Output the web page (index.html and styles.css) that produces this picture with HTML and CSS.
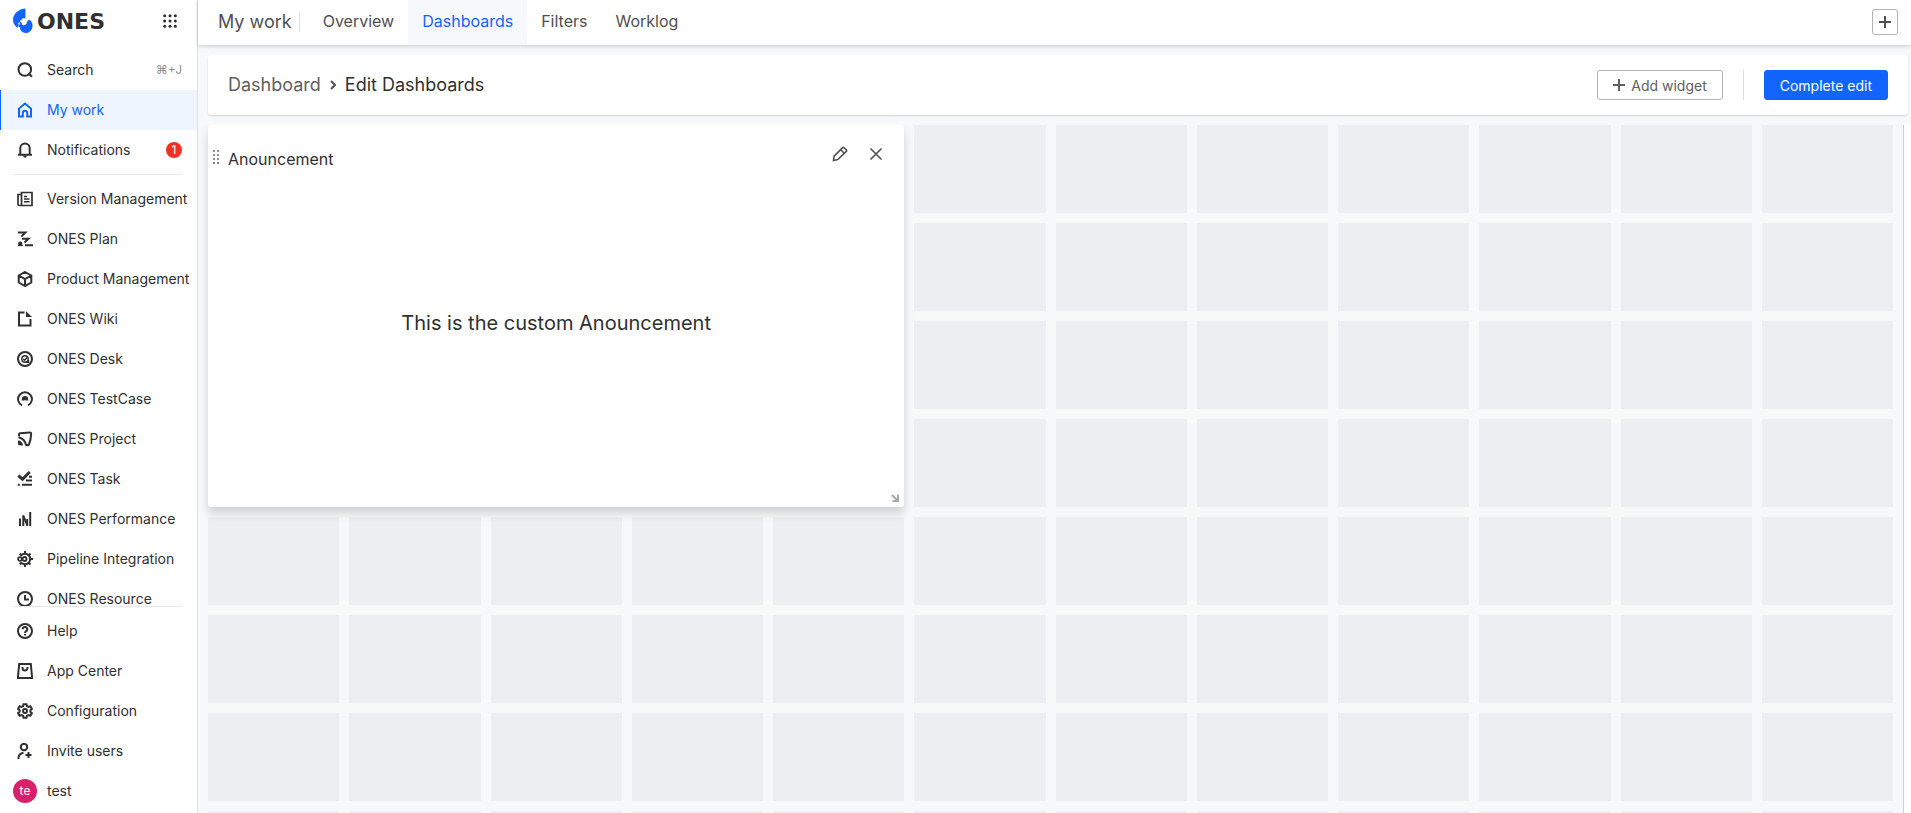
FILE: index.html
```html
<!DOCTYPE html>
<html lang="en">
<head>
<meta charset="utf-8">
<title>Edit Dashboards - ONES</title>
<link rel="stylesheet" href="styles.css">
</head>
<body>
<div class="app">
  <aside class="sidebar">
    <div class="brand">
      <a class="logo" href="#">
        <svg class="logo-mark" viewBox="0 0 22 26" aria-hidden="true"><path fill="#1264ff" d="M13 0v10.400c-1 .2-1.300-.8-2.500-.4-1 .3-.8 1.600-1.800 1.800-.9.200-1.300.5-1.100 1.500.2.900-.5 1.200-1.300 1.300-1 .2-.9 1-.5 1.700.5.900-.2 1.500-.8 2.200-.4.600-.3 1.400.2 2.100C2.400 18.600 0 15.800 0 12.200 0 5.400 6 .4 13 0z"/><path fill="#1264ff" d="M7.400 19.500c-1.100.1-2.100-.6-2-1.500.2-1 1.500-.8 1.800-1.700.2-.8-.6-1.400.1-2 .6-.5 1.300-.2 1.700.4.500.9 0 1.900.9 2.400 1.400.8 2.700 0 3.700-.8 1.500-1.200 1-3 2.300-4 1-.7 2.200-.2 2.900.6a7.400 7.400 0 0 1 1.700 4.700c0 4.500-3.200 7.900-7.200 7.900-3.300 0-6-2.600-5.900-6z"/></svg>
        <span class="logo-text">ONES</span>
      </a>
      <button class="apps" aria-label="Applications">
        <svg viewBox="0 0 14 14"><circle cx="1.700" cy="1.700" r="1.500"/><circle cx="7" cy="1.700" r="1.500"/><circle cx="12.300" cy="1.700" r="1.500"/><circle cx="1.700" cy="7" r="1.500"/><circle cx="7" cy="7" r="1.500"/><circle cx="12.300" cy="7" r="1.500"/><circle cx="1.700" cy="12.300" r="1.500"/><circle cx="7" cy="12.300" r="1.500"/><circle cx="12.300" cy="12.300" r="1.500"/></svg>
      </button>
    </div>
    <nav class="nav">
      <a class="item" href="#"><svg class="ico" viewBox="0 0 16 16"><circle cx="7.800" cy="7.500" r="6.300"/><path d="M12 11.800l3 3"/></svg>Search<span class="hint">⌘+J</span></a>
      <a class="item active" href="#"><svg class="ico" viewBox="0 0 16 16"><path d="M5.800 14.500H2V6.600L8 1.500l6 5.100v7.900h-3.800v-3.500a2.200 2.200 0 0 0-4.400 0z"/></svg>My work</a>
      <a class="item" href="#"><svg class="ico" viewBox="0 0 16 16"><path d="M3.300 12V6.300a4.700 4.700 0 0 1 9.400 0V12M1 12.700h14"/><path d="M5.300 13.500h5.400L8 16z" fill="currentColor" stroke="none"/></svg>Notifications<span class="badge">1</span></a>
    </nav>
    <hr class="rule">
    <nav class="nav products">
      <a class="item" href="#"><svg class="ico" viewBox="0 0 16 16"><path d="M4.500 1.500H15v13H2.500A1.500 1.500 0 0 1 1 13V3.500h3.500zM4.500 3v11" stroke-width="1.700"/><path d="M7 5.500h3M7 8h5.500M7 10.700h5.500" stroke-width="1.500"/></svg>Version Management</a>
      <a class="item" href="#"><svg class="ico" viewBox="0 0 16 16"><path d="M1 1.500h7.500L4.300 5.600M5 7.800h6.500L7.500 11.500M8 14.300h8"/><circle cx="3.200" cy="12.600" r="2.100" fill="currentColor" stroke="none"/><path d="M.8 14.400h5" stroke-width="1.500"/></svg>ONES Plan</a>
      <a class="item" href="#"><svg class="ico" viewBox="0 0 16 16"><path d="M8 1l6.300 3.500v7L8 15l-6.300-3.500v-7zM2.500 5L8 8.200 13.500 5M8 8v6.500"/></svg>Product Management</a>
      <a class="item" href="#"><svg class="ico" viewBox="0 0 16 16"><path d="M7.500 1.500H2v13h11.500V8"/><path d="M9 .3L15 6H9z" fill="currentColor" stroke="none"/></svg>ONES Wiki</a>
      <a class="item" href="#"><svg class="ico" viewBox="0 0 16 16"><circle cx="8" cy="8" r="7"/><circle cx="8" cy="8" r="3.200" stroke-width="1.400"/><path d="M6.200 8l1.400 1.300 2.600-2.800M9 11.200h2.500V9" stroke-width="1.400"/></svg>ONES Desk</a>
      <a class="item" href="#"><svg class="ico" viewBox="0 0 16 16"><path d="M5 14.300a6.900 6.900 0 1 1 6 0"/><path d="M4.800 10V8.300a3.200 3.200 0 0 1 6.400 0V10L9.500 8.800v1.700L8 8.800l-1.500 1.700V8.800z" fill="currentColor" stroke="none"/></svg>ONES TestCase</a>
      <a class="item" href="#"><svg class="ico" viewBox="0 0 16 16"><path d="M2 5.300V3.500Q2 2.500 3 2.200L13 1.400q1.200 0 1.200 1.200-.2 6-2.400 11.200-.4.700-1 .5L8.500 13.800"/><path d="M1.500 6.200c4 1 6.800 3.800 7.500 8"/><path d="M1 9.500a5 5 0 0 1 5 5H3l-2-1z" fill="currentColor" stroke="none"/></svg>ONES Project</a>
      <a class="item" href="#"><svg class="ico" viewBox="0 0 16 16"><path d="M1.300 4.600l4.200 3.600L12.700 1" stroke-width="3"/><path d="M12 5.700H15M9 9.600h6M5 13.800h10M.8 13.800h2"/></svg>ONES Task</a>
      <a class="item" href="#"><svg class="ico" viewBox="0 0 16 16"><path d="M3 7.500V15M6.300 4.300V15M10.200 8v7M13.200 1v14"/><path d="M6.300 5l4 9"/></svg>ONES Performance</a>
      <a class="item" href="#"><svg class="ico" viewBox="0 0 16 16"><path d="M4.200 4.200a5.300 5.300 0 1 1 0 7.600M8 0v3M8 13v3M13 8h3M2.700 2.700l2 2M11.500 4.500l2-2M11.500 11.500l2 2M2.700 13.300l2-2"/><circle cx="3" cy="8" r="1.900" stroke-width="1.800"/><circle cx="7.500" cy="8" r="2" stroke-width="1.800"/></svg>Pipeline Integration</a>
      <a class="item" href="#"><svg class="ico" viewBox="0 0 16 16"><circle cx="8" cy="8" r="7"/><path d="M8 4v4.500h4"/></svg>ONES Resource</a>
    </nav>
    <hr class="rule">
    <nav class="nav">
      <a class="item" href="#"><svg class="ico" viewBox="0 0 16 16"><circle cx="8" cy="8" r="7"/><path d="M5.700 6.300a2.300 2.300 0 1 1 3.500 1.900Q8 8.900 8 10M8 10.900v1.600"/></svg>Help</a>
      <a class="item" href="#"><svg class="ico" viewBox="0 0 16 16"><path d="M2.200 1h11.600L15 13.500V15H1v-1.500z"/><path d="M5.500 4v1a2.500 2.500 0 0 0 5 0V4"/></svg>App Center</a>
      <a class="item" href="#"><svg class="ico" viewBox="0 0 16 16"><path d="M6.500 1.200h3l.4 2 1.500.8 2-.7 1.500 2.500-1.500 1.400v1.600l1.500 1.400-1.500 2.500-2-.7-1.500.8-.4 2h-3l-.4-2-1.500-.8-2 .7-1.500-2.500 1.500-1.400V7.200L1.100 5.800l1.500-2.500 2 .7 1.500-.8z"/><circle cx="8" cy="8" r="2"/></svg>Configuration</a>
      <a class="item" href="#"><svg class="ico" viewBox="0 0 16 16"><circle cx="7" cy="4" r="3.200"/><path d="M1.500 16v-1.500Q2 10.500 6.500 9.800M11.500 9v6M8.500 12h6"/></svg>Invite users</a>
      <a class="item user" href="#"><span class="avatar">te</span>test</a>
    </nav>
  </aside>
  <main class="main">
    <header class="topbar">
      <h1 class="section">My work</h1>
      <nav class="tabs">
        <a class="tab" href="#">Overview</a>
        <a class="tab current" href="#">Dashboards</a>
        <a class="tab" href="#">Filters</a>
        <a class="tab" href="#">Worklog</a>
      </nav>
      <button class="create" aria-label="Create"><svg viewBox="0 0 12 12"><path d="M6 0v12M0 6h12"/></svg></button>
    </header>
    <section class="toolbar">
      <a class="crumb" href="#">Dashboard</a>
      <svg class="chevron" viewBox="0 0 6 10"><path d="M1 1l4 4-4 4"/></svg>
      <h2 class="crumb here">Edit Dashboards</h2>
      <div class="actions">
        <button class="btn"><svg viewBox="0 0 12 12"><path d="M6 0v12M0 6h12"/></svg>Add widget</button>
        <span class="sep"></span>
        <button class="btn primary">Complete edit</button>
      </div>
    </section>
    <div class="canvas">
      <div class="grid">
        <article class="widget">
          <header class="widget-head">
            <svg class="grip" viewBox="0 0 6 14"><path d="M1 0v14M5 0v14" stroke-dasharray="2 2"/></svg>
            <h3 class="widget-title">Anouncement</h3>
            <div class="widget-tools">
              <button class="tool" aria-label="Edit"><svg viewBox="0 0 16 16"><path d="M1.500 14.500l.6-4.300L10.600 1.700q.8-.7 1.500 0l2.200 2.200q.7.700 0 1.500L5.800 13.600zM8.700 3.700l3.600 3.600"/></svg></button>
              <button class="tool" aria-label="Remove"><svg viewBox="0 0 16 16"><path d="M2.500 2.500l11 11M13.500 2.500l-11 11"/></svg></button>
            </div>
          </header>
          <p class="widget-body">This is the custom Anouncement</p>
          <svg class="resize" viewBox="0 0 8 8"><path d="M1 1l5 5M1.500 7H7V.5" /></svg>
        </article>
        <i></i><i></i><i></i><i></i><i></i><i></i><i></i>
        <i></i><i></i><i></i><i></i><i></i><i></i><i></i>
        <i></i><i></i><i></i><i></i><i></i><i></i><i></i>
        <i></i><i></i><i></i><i></i><i></i><i></i><i></i>
        <i></i><i></i><i></i><i></i><i></i><i></i><i></i><i></i><i></i><i></i><i></i><i></i>
        <i></i><i></i><i></i><i></i><i></i><i></i><i></i><i></i><i></i><i></i><i></i><i></i>
        <i></i><i></i><i></i><i></i><i></i><i></i><i></i><i></i><i></i><i></i><i></i><i></i>
        <i></i><i></i><i></i><i></i><i></i><i></i><i></i><i></i><i></i><i></i><i></i><i></i>
      </div>
      <div class="track"></div>
    </div>
  </main>
</div>
</body>
</html>
```
FILE: styles.css
```css
* { box-sizing: border-box; }
body {
  margin: 0;
  font-family: Inter, "Liberation Sans", sans-serif;
  font-size: 14px;
  color: #303030;
  background: #f7f8fa;
}
a { color: inherit; text-decoration: none; }
button { font: inherit; color: inherit; cursor: pointer; padding: 0; border: 0; background: none; }
svg { display: block; fill: none; stroke: currentColor; flex: none; }
h1, h2, h3, p { margin: 0; font-weight: 400; }

.app { display: flex; height: 100vh; overflow: hidden; }

.sidebar {
  flex: none;
  width: 198px;
  display: flex;
  flex-direction: column;
  background: #fff;
  border-right: 1px solid #dcdfe8;
  padding-bottom: 2px;
}
.brand { display: flex; align-items: center; justify-content: space-between; height: 42px; margin-bottom: 8px; padding: 0 20px 0 13px; }
.logo { display: flex; align-items: center; gap: 3px; }
.logo-mark { width: 21px; height: 26px; stroke: none; }
.logo-text { font: 700 22px/28px "DejaVu Sans", sans-serif; padding-top: 2px; color: #303030; }
.apps svg { width: 14px; height: 14px; stroke: none; fill: #2d2d2d; }

.nav { flex: none; }
.products { flex: 1; min-height: 0; overflow: hidden; }
.item {
  position: relative;
  display: flex;
  align-items: center;
  gap: 14px;
  height: 40px;
  padding: 0 15px 0 17px;
  line-height: 16px;
  white-space: nowrap;
}
.ico { width: 16px; height: 16px; stroke-width: 2; }
.active { color: #1264ff; background: #eef5ff; box-shadow: inset 1px 0 #1264ff; }
.hint { margin-left: auto; font-size: 12px; color: #909090; }
.badge {
  width: 16px;
  height: 16px;
  margin-left: auto;
  border-radius: 50%;
  background: #f03222;
  color: #fff;
  font-size: 12px;
  text-align: center;
}
.rule { flex: none; width: auto; height: 1px; margin: 4px 15px 4px 13px; border: 0; background: #e8e8e8; }
.products + .rule { margin-top: 0; }
.user { gap: 10px; padding-left: 13px; }
.avatar { width: 24px; height: 24px; border-radius: 50%; background: #dc1f6b; color: #fff; font-size: 12px; line-height: 24px; text-align: center; }

.main { flex: 1; min-width: 0; display: flex; flex-direction: column; }
.topbar {
  flex: none;
  display: flex;
  align-items: center;
  height: 45px;
  padding: 0 13px 10px 20px;
  background: #fff;
  box-shadow: 0 1px 4px rgba(0, 0, 0, .2);
  color: #505050;
}
.section { font-size: 18px; line-height: 20px; padding-right: 7px; border-right: 1px solid #dedede; margin-top: 8px; }
.tabs { display: flex; align-self: flex-start; margin-left: 9px; }
.tab { height: 45px; padding: 0 14px; font-size: 16px; line-height: 42px; }
.current { color: #1264ff; background: #f7f8fa; }
.create { display: grid; place-items: center; width: 26px; height: 26px; margin-top: 8px; margin-left: auto; border: 1px solid #b4b4b4; border-radius: 3px; }
.create svg, .btn svg { width: 12px; height: 12px; stroke-width: 2; }

.toolbar {
  flex: none;
  display: flex;
  align-items: center;
  height: 60px;
  margin: 10px 3px 10px 10px;
  padding: 0 20px;
  border-radius: 3px;
  background: #fff;
  box-shadow: 0 1px 2px rgba(0, 0, 0, .15);
}
.crumb { font-size: 18px; line-height: 24px; color: #606060; }
.here { color: #303030; }
.chevron { width: 6px; height: 10px; margin: 0 9px; stroke: #505050; stroke-width: 2; }
.actions { display: flex; align-items: center; margin-left: auto; }
.btn {
  display: flex;
  align-items: center;
  justify-content: center;
  gap: 6px;
  height: 30px;
  padding: 0 15px;
  border: 1px solid #b4b4b4;
  border-radius: 3px;
  color: #606060;
}
.primary { color: #fff; background: #1264ff; border-color: #1264ff; }
.sep { width: 1px; height: 30px; margin: 0 20px; background: #dedede; }

.canvas { flex: 1; min-height: 0; display: flex; overflow: hidden; }
.grid {
  flex: 1;
  display: grid;
  grid-template-columns: repeat(12, 1fr);
  grid-auto-rows: 88px;
  gap: 10px;
  padding: 0 10px;
}
.grid > i { background: #edeef2; }
.track { width: 8px; background: #fff; border-left: 1px solid #cfcfcf; }

.widget {
  grid-column: 1 / 6;
  grid-row: 1 / 5;
  position: relative;
  z-index: 1;
  display: flex;
  flex-direction: column;
  border-radius: 3px;
  background: #fff;
  box-shadow: 0 6px 10px rgba(0, 0, 0, .16);
}
.widget-head { display: flex; align-items: center; height: 68px; padding: 0 20px 0 5px; }
.grip { width: 6px; height: 14px; margin: 0 9px 5px 0; stroke: #909090; stroke-width: 2; }
.widget-title { font-size: 16px; line-height: 24px; }
.widget-tools { display: flex; gap: 20px; margin: 0 0 10px auto; }
.tool svg { width: 16px; height: 16px; color: #505050; stroke-width: 1.6; }
.widget-body { flex: 1; display: grid; place-items: center; padding-bottom: 55px; font-size: 20px; }
.resize { position: absolute; right: 5px; bottom: 5px; width: 8px; height: 8px; stroke: #a8a8a8; stroke-width: 2; }
```
